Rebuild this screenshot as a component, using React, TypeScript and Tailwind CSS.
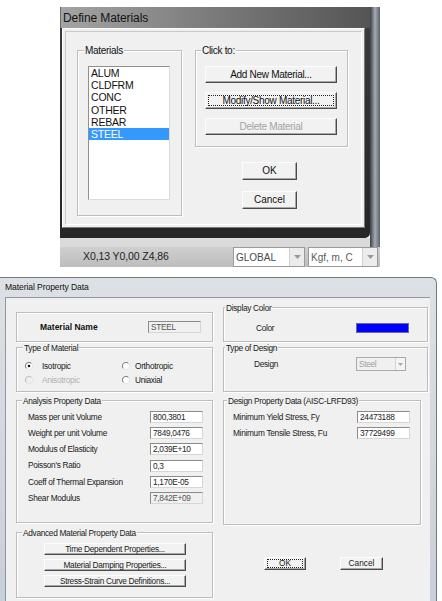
import React from "react";

type BtnProps = {
  className?: string;
  children?: React.ReactNode;
  focus?: boolean;
  focusClass?: string;
  disabled?: boolean;
};

function RaisedBtn({ className = "", children, focus = false, focusClass = "m-[2px]", disabled = false }: BtnProps) {
  return (
    <div
      className={
        "flex bg-[#f2f2f2] border border-t-[#fdfdfd] border-l-[#fdfdfd] border-r-[#4a4a4a] border-b-[#4a4a4a] shadow-[inset_-1px_-1px_0_#a8a8a8] " +
        className
      }
    >
      <div
        className={
          "flex-1 flex items-center justify-center whitespace-nowrap leading-none " +
          (focus ? focusClass + " border border-dotted border-[#222] " : "") +
          (disabled ? "text-[#a3a3a3]" : "")
        }
      >
        {children}
      </div>
    </div>
  );
}

type GroupProps = {
  label?: string;
  className?: string;
  labelClass?: string;
  children?: React.ReactNode;
};

function Group({ label, className = "", labelClass = "", children }: GroupProps) {
  return (
    <div
      className={
        "flex flex-col border border-[#bdbdbd] shadow-[inset_1px_1px_0_#ffffff,1px_1px_0_#ffffff] " + className
      }
    >
      {label ? <span className={"self-start bg-[#f0f0f0] px-[1px] whitespace-nowrap " + labelClass}>{label}</span> : null}
      {children}
    </div>
  );
}

function Radio({ checked = false, disabled = false }: { checked?: boolean; disabled?: boolean }) {
  return (
    <svg width="8" height="8" viewBox="0 0 8 8" className="shrink-0">
      <circle cx="4" cy="4" r="3.5" fill={disabled ? "#f0f0f0" : "#ffffff"} />
      <path d="M6.6 1.4 A3.6 3.6 0 0 0 1.4 6.6" stroke={disabled ? "#b5b5b5" : "#6e6e6e"} strokeWidth="1" fill="none" />
      <path d="M1.4 6.6 A3.6 3.6 0 0 0 6.6 1.4" stroke="#e2e2e2" strokeWidth="1" fill="none" />
      {checked ? <circle cx="4" cy="4" r="1.3" fill="#111" /> : null}
    </svg>
  );
}

function Field({ value, disabled = false, className = "" }: { value: string; disabled?: boolean; className?: string }) {
  return (
    <div
      className={
        "w-[53px] h-[12px] flex items-center pl-[2px] border border-[#8a8a8a] border-r-[#d6d6d6] border-b-[#d6d6d6] leading-none " +
        (disabled ? "bg-[#f0f0f0] text-[#555]" : "bg-white text-[#222]") +
        " " +
        className
      }
    >
      {value}
    </div>
  );
}

function PropRow({ label, value, labelW, disabled = false }: { label: string; value: string; labelW: string; disabled?: boolean }) {
  return (
    <div className="flex items-center h-[16.2px]">
      <div className={labelW + " whitespace-nowrap"}>{label}</div>
      <Field value={value} disabled={disabled} />
    </div>
  );
}

function DownArrow({ color = "#6a6a6a" }: { color?: string }) {
  return (
    <svg width="7" height="4" viewBox="0 0 7 4">
      <path d="M0 0 H7 L3.5 4 Z" fill={color} />
    </svg>
  );
}

function TopDialog() {
  const items = ["ALUM", "CLDFRM", "CONC", "OTHER", "REBAR", "STEEL"];
  return (
    <div className="ml-[60px] mt-[7px] w-[320px] flex flex-col">
      <div className="flex h-[240px]">
        <div className="w-[310px] flex flex-col">
          <div className="h-[21px] bg-linear-to-r from-[#a4a4a4] via-[#7a7a7a] to-[#555555] border-l border-[#6a6a6a] flex items-center pl-[2px] text-[12px] text-[#141414] tracking-[-0.1px]">
            Define Materials
          </div>
          <div className="h-[210px] bg-linear-to-b from-[#3a3a3a] to-[#262626] pl-[2px] pr-[5px] pb-[10px] rounded-br-[5px]">
            <div className="h-[200px] bg-[#f0f0f0] border border-[#fdfdfd] border-r-[#7a7a7a] border-b-[#7a7a7a] flex">
              <div className="flex-1 m-[2px] border border-[#c9c9c9] border-r-[#ffffff] border-b-[#ffffff] flex pl-[11px] pt-[18px] gap-[13px] text-[10px] text-[#111]">
                <Group
                  label="Materials"
                  className="w-[105px] h-[166px]"
                  labelClass="-mt-[6px] ml-[6px] leading-[12px] tracking-[-0.3px]"
                >
                  <div className="mt-[9px] ml-[10px] w-[82px] h-[134px] bg-white border border-[#8f8f8f] border-r-[#dcdcdc] border-b-[#dcdcdc] flex flex-col">
                    {items.map((it) => (
                      <div
                        key={it}
                        className={
                          "h-[12.2px] leading-[12.2px] pl-[2px] text-[10.5px] tracking-[-0.2px] " +
                          (it === "STEEL" ? "bg-[#3399ff] text-white" : "text-[#111]")
                        }
                      >
                        {it}
                      </div>
                    ))}
                  </div>
                </Group>
                <div className="w-[153px] flex flex-col">
                  <Group
                    label="Click to:"
                    className="h-[97px]"
                    labelClass="-mt-[6px] ml-[5px] leading-[12px] tracking-[-0.3px]"
                  >
                    <div className="mt-[9px] ml-[9px] flex flex-col gap-[9px]">
                      <RaisedBtn className="w-[132px] h-[17px] tracking-[-0.3px]">Add New Material...</RaisedBtn>
                      <RaisedBtn className="w-[132px] h-[17px] tracking-[-0.3px]" focus>
                        Modify/Show Material...
                      </RaisedBtn>
                      <RaisedBtn className="w-[132px] h-[17px] tracking-[-0.3px]" disabled>
                        Delete Material
                      </RaisedBtn>
                    </div>
                  </Group>
                  <RaisedBtn className="mt-[15px] ml-[47px] w-[55px] h-[18px]">OK</RaisedBtn>
                  <RaisedBtn className="mt-[11px] ml-[47px] w-[55px] h-[18px]">Cancel</RaisedBtn>
                </div>
              </div>
            </div>
          </div>
          <div className="flex-1 bg-[#dadada]" />
        </div>
        <div className="w-[10px] bg-linear-to-r from-[#3c4149] via-[#a6abb3] to-[#5f646c]" />
      </div>
      <div className="h-[20px] flex bg-linear-to-b from-[#cfcfcf] to-[#bdbdbd] text-[10.5px]">
        <div className="w-[173px] flex items-center pl-[23px] text-[#222] tracking-[-0.1px] whitespace-nowrap">
          X0,13 Y0,00 Z4,86
        </div>
        <div className="w-[72px] flex bg-white border border-[#9a9a9a]">
          <div className="flex-1 flex items-center pl-[2px] text-[#4a4a4a] text-[10px]">GLOBAL</div>
          <div className="w-[15px] flex items-center justify-center bg-[#ececec] border-l border-[#d0d0d0]">
            <DownArrow color="#9a9a9a" />
          </div>
        </div>
        <div className="ml-[3px] w-[70px] flex bg-white border border-[#9a9a9a]">
          <div className="flex-1 flex items-center pl-[2px] text-[#5a5a5a] text-[10px] whitespace-nowrap">Kgf, m, C</div>
          <div className="w-[15px] flex items-center justify-center bg-[#ececec] border-l border-[#d0d0d0]">
            <DownArrow color="#9a9a9a" />
          </div>
        </div>
      </div>
    </div>
  );
}

function BottomDialog() {
  const lbl = "-mt-[5px] leading-[10px]";
  return (
    <div className="mt-[10px] w-[437px] flex-1 flex flex-col rounded-tr-[6px] border-t border-r border-[#6f7781] bg-linear-to-b from-[#dde1e6] to-[#c9cfd6]">
      <div className="h-[19px] flex items-center pl-[5px] text-[8.6px] text-[#111] tracking-[-0.1px]">
        Material Property Data
      </div>
      <div className="flex-1 ml-[5px] mr-[6px] bg-[#f0f0f0] border-t border-l border-[#8f98a2] flex gap-[10px] pl-[10px] pt-[9px] text-[8.3px] tracking-[-0.3px] text-[#1a1a1a]">
        {/* left column */}
        <div className="w-[197px] flex flex-col mt-[5px]">
          <Group className="h-[30px] !flex-row items-center">
            <div className="pl-[23px] w-[131px] font-bold text-[8.5px] tracking-[0px] text-[#111]">Material Name</div>
            <Field value="STEEL" disabled className="text-[#9a9a9a]" />
          </Group>
          <Group label="Type of Material" className="mt-[5px] h-[45px]" labelClass={lbl + " ml-[6px]"}>
            <div className="mt-[6px] flex flex-col">
              <div className="flex items-center h-[14px]">
                <div className="w-[105px] pl-[8px] flex items-center">
                  <Radio checked />
                  <span className="ml-[9px]">Isotropic</span>
                </div>
                <div className="flex items-center">
                  <Radio />
                  <span className="ml-[5px]">Orthotropic</span>
                </div>
              </div>
              <div className="flex items-center h-[14px]">
                <div className="w-[105px] pl-[8px] flex items-center">
                  <Radio disabled />
                  <span className="ml-[9px] text-[#b0b0b0]">Anisotropic</span>
                </div>
                <div className="flex items-center">
                  <Radio />
                  <span className="ml-[5px]">Uniaxial</span>
                </div>
              </div>
            </div>
          </Group>
          <Group label="Analysis Property Data" className="mt-[8px] h-[123px]" labelClass={lbl + " ml-[5px]"}>
            <div className="mt-[3px] pl-[11px] flex flex-col">
              <PropRow label="Mass per unit Volume" value="800,3801" labelW="w-[122px]" />
              <PropRow label="Weight per unit Volume" value="7849,0476" labelW="w-[122px]" />
              <PropRow label="Modulus of Elasticity" value="2,039E+10" labelW="w-[122px]" />
              <PropRow label="Poisson's Ratio" value="0,3" labelW="w-[122px]" />
              <PropRow label="Coeff of Thermal Expansion" value="1,170E-05" labelW="w-[122px]" />
              <PropRow label="Shear Modulus" value="7,842E+09" labelW="w-[122px]" disabled />
            </div>
          </Group>
          <Group label="Advanced Material Property Data" className="mt-[9px] h-[66px]" labelClass={lbl + " ml-[5px]"}>
            <div className="mt-[5px] pl-[27px] flex flex-col gap-[4px]">
              <RaisedBtn className="w-[142px] h-[12px]">Time Dependent Properties...</RaisedBtn>
              <RaisedBtn className="w-[142px] h-[12px]">Material Damping Properties...</RaisedBtn>
              <RaisedBtn className="w-[142px] h-[12px]">Stress-Strain Curve Definitions...</RaisedBtn>
            </div>
          </Group>
        </div>
        {/* right column */}
        <div className="w-[205px] flex flex-col">
          <Group label="Display Color" className="h-[35px]" labelClass={lbl + " ml-[1px]"}>
            <div className="mt-[5px] h-[20px] flex items-center">
              <div className="w-[132px] pl-[32px]">Color</div>
              <div className="w-[53px] h-[10px] bg-[#0000ff] border border-[#6b6b9a]" />
            </div>
          </Group>
          <Group label="Type of Design" className="mt-[5px] h-[45px]" labelClass={lbl + " ml-[1px]"}>
            <div className="mt-[4px] h-[14px] flex items-center">
              <div className="w-[132px] pl-[30px]">Design</div>
              <div className="w-[50px] h-[14px] flex bg-[#f0f0f0] border border-[#a9a9a9]">
                <div className="flex-1 flex items-center pl-[2px] text-[#a0a0a0]">Steel</div>
                <div className="w-[10px] flex items-center justify-center border-l border-[#d5d5d5] bg-[#f4f4f4]">
                  <svg width="5" height="3" viewBox="0 0 5 3">
                    <path d="M0 0 H5 L2.5 3 Z" fill="#a8a8a8" />
                  </svg>
                </div>
              </div>
            </div>
          </Group>
          <Group
            label="Design Property Data (AISC-LRFD93)"
            className="mt-[8px] w-[198px] h-[125px]"
            labelClass={lbl + " ml-[3px]"}
          >
            <div className="mt-[3px] pl-[9px] flex flex-col">
              <PropRow label="Minimum Yield Stress, Fy" value="24473188" labelW="w-[124px]" />
              <PropRow label="Minimum Tensile Stress, Fu" value="37729499" labelW="w-[124px]" />
            </div>
          </Group>
          <div className="mt-[32px] pl-[41px] flex gap-[34px] tracking-[0px]">
            <RaisedBtn className="w-[42px] h-[13px]" focus focusClass="mx-[2px] my-[1px]">
              OK
            </RaisedBtn>
            <RaisedBtn className="w-[43px] h-[13px]">Cancel</RaisedBtn>
          </div>
        </div>
      </div>
    </div>
  );
}

export default function App() {
  return (
    <div className="w-[442px] h-[601px] bg-white overflow-hidden flex flex-col font-['Liberation_Sans',Arial,sans-serif]">
      <TopDialog />
      <BottomDialog />
    </div>
  );
}
